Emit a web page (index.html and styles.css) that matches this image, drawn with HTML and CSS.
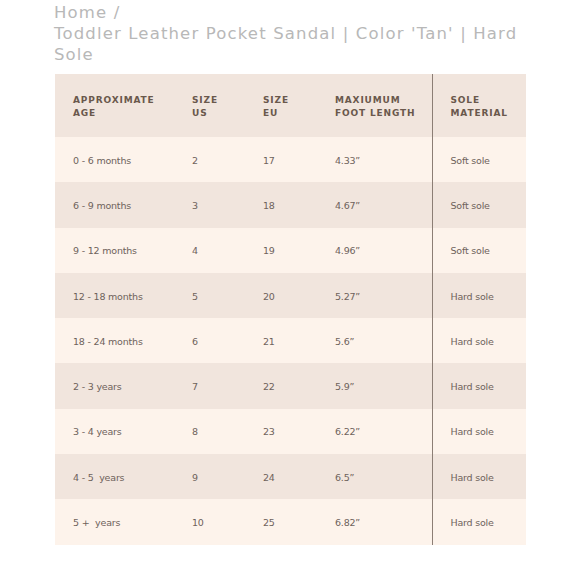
FILE: index.html
```html
<!DOCTYPE html>
<html>
<head>
<meta charset="utf-8">
<link rel="stylesheet" href="styles.css">
</head>
<body>
<div class="page">
  <nav class="crumbs">Home /<br>Toddler Leather Pocket Sandal | Color 'Tan' | Hard Sole</nav>
  <table class="sizes">
    <colgroup>
      <col class="c1"><col class="c2"><col class="c3"><col class="c4"><col class="c5">
    </colgroup>
    <thead>
      <tr>
        <th>APPROXIMATE<br>AGE</th>
        <th>SIZE<br>US</th>
        <th>SIZE<br>EU</th>
        <th class="div">MAXIUMUM<br>FOOT LENGTH</th>
        <th>SOLE<br>MATERIAL</th>
      </tr>
    </thead>
    <tbody>
      <tr><td>0 - 6 months</td><td>2</td><td>17</td><td class="div">4.33”</td><td>Soft sole</td></tr>
      <tr><td>6 - 9 months</td><td>3</td><td>18</td><td class="div">4.67”</td><td>Soft sole</td></tr>
      <tr><td>9 - 12 months</td><td>4</td><td>19</td><td class="div">4.96”</td><td>Soft sole</td></tr>
      <tr><td>12 - 18 months</td><td>5</td><td>20</td><td class="div">5.27”</td><td>Hard sole</td></tr>
      <tr><td>18 - 24 months</td><td>6</td><td>21</td><td class="div">5.6”</td><td>Hard sole</td></tr>
      <tr><td>2 - 3 years</td><td>7</td><td>22</td><td class="div">5.9”</td><td>Hard sole</td></tr>
      <tr><td>3 - 4 years</td><td>8</td><td>23</td><td class="div">6.22”</td><td>Hard sole</td></tr>
      <tr><td>4 - 5&nbsp; years</td><td>9</td><td>24</td><td class="div">6.5”</td><td>Hard sole</td></tr>
      <tr><td>5 +&nbsp; years</td><td>10</td><td>25</td><td class="div">6.82”</td><td>Hard sole</td></tr>
    </tbody>
  </table>
</div>
</body>
</html>
```
FILE: styles.css
```css
html, body {
  margin: 0;
  padding: 0;
  background: #ffffff;
}
.page {
  padding: 2px 54px 0 54px;
  font-family: "DejaVu Sans", "Open Sans", sans-serif;
}
.crumbs {
  font-size: 16.5px;
  line-height: 21px;
  letter-spacing: 1.15px;
  color: #b8b8b8;
  margin-bottom: 9px;
  width: 472px;
}
.sizes {
  border-collapse: collapse;
  table-layout: fixed;
  width: 471px;
  margin-left: 1px;
}
.c1 { width: 119px; }
.c2 { width: 71px; }
.c3 { width: 72px; }
.c4 { width: 115px; }
.c5 { width: 94px; }
.sizes th {
  background: #f1e5dd;
  height: 63px;
  box-sizing: border-box;
  padding: 2px 0 0 18px;
  text-align: left;
  font-size: 9px;
  line-height: 12.5px;
  letter-spacing: 0.85px;
  font-weight: bold;
  color: #6a584c;
}
.sizes td {
  height: 45.3px;
  padding: 1px 0 0 18px;
  font-size: 9.5px;
  letter-spacing: -0.2px;
  color: #6e625b;
  box-sizing: border-box;
}
.sizes tbody tr:nth-child(odd) td { background: #fdf3eb; }
.sizes tbody tr:nth-child(even) td { background: #f1e5dd; }
.sizes .div { border-right: 1px solid #8c7e75; }
```
